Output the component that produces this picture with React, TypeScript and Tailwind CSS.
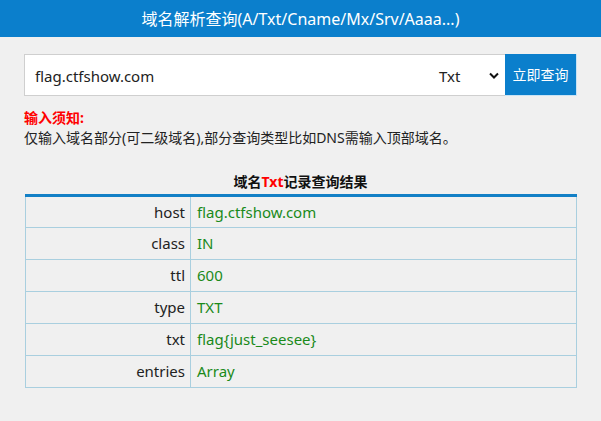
const rows: [string, string][] = [
  ['host', 'flag.ctfshow.com'],
  ['class', 'IN'],
  ['ttl', '600'],
  ['type', 'TXT'],
  ['txt', 'flag{just_seesee}'],
  ['entries', 'Array'],
]

export default function App() {
  return (
    <div
      className="h-[421px] w-[601px] bg-[#f0f0f0] text-[14px] text-[#222]"
      style={{ fontFamily: '"Noto Sans", "Noto Sans CJK SC", sans-serif' }}
    >
      <div className="flex h-[37px] items-center justify-center bg-[#0b7fcc] text-[16px] text-white">
        域名解析查询(A/Txt/Cname/Mx/Srv/Aaaa...)
      </div>

      <div className="px-6 pt-[17px]">
        <div className="flex h-[42px] w-[553px]">
          <div className="flex flex-1 items-center border border-r-0 border-[#cfcfcf] bg-white pl-[10px]">
            <span className="flex-1 pt-[2px] text-[15px] text-[#222]">flag.ctfshow.com</span>
            <span className="w-[50px] pt-[2px] text-[15px] text-[#222]">Txt</span>
            <svg width="10" height="7" viewBox="0 0 10 7" className="mr-[6px]">
              <path d="M1 1.5 L5 5.5 L9 1.5" stroke="#111" strokeWidth="2" fill="none" />
            </svg>
          </div>
          <div className="flex w-[72px] items-center justify-center border-r border-b border-[#c8e3f5] bg-[#0b7fcc] text-[14px] text-white">
            立即查询
          </div>
        </div>

        <div className="mt-[12px] text-[14px] leading-[20px] font-bold text-[#ff0000]">输入须知:</div>
        <div className="text-[14px] leading-[20px]">仅输入域名部分(可二级域名),部分查询类型比如DNS需输入顶部域名。</div>

        <div className="mt-[26px] w-[553px] text-center text-[14px] leading-[16px] font-bold text-[#111]">
          域名<span className="text-[#ff0000]">Txt</span>记录查询结果
        </div>
        <table className="mt-[4px] ml-[1px] w-[552px] border-collapse border-t-[3px] border-t-[#1380c6]">
          <tbody>
            {rows.map(([k, v]) => (
              <tr key={k} className="h-[32px]">
                <td className="w-[165px] border border-t-0 border-[#a9cfdf] pr-[5px] text-right text-[15px] text-[#222]">
                  {k}
                </td>
                <td className="border border-t-0 border-[#a9cfdf] pl-[6px] text-[15px] text-[#1a8a1a]">{v}</td>
              </tr>
            ))}
          </tbody>
        </table>
      </div>
    </div>
  )
}
